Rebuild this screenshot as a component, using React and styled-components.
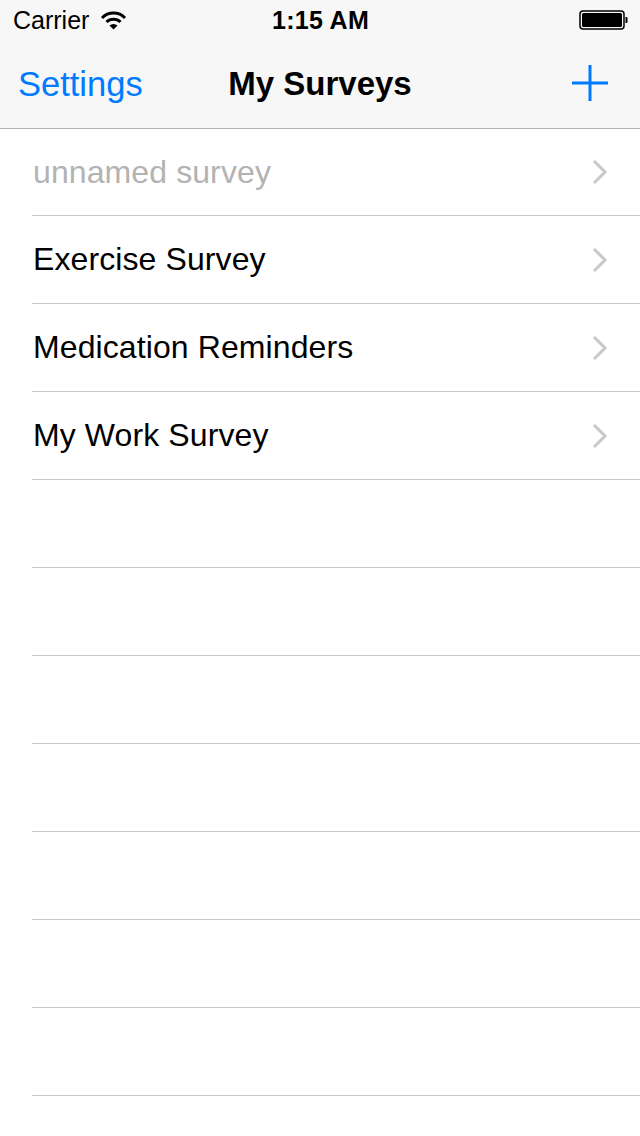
import React from "react";
import styled, { createGlobalStyle } from "styled-components";

const GlobalStyle = createGlobalStyle`
  html, body {
    margin: 0;
    padding: 0;
    background: #ffffff;
    font-family: "Liberation Sans", Arial, sans-serif;
  }
`;

const Screen = styled.div`
  width: 640px;
  height: 1136px;
  overflow: hidden;
  background: #ffffff;
`;

const Header = styled.div`
  background: #f7f7f7;
  border-bottom: 1px solid #b2b2b2;
`;

const StatusBar = styled.div`
  height: 40px;
  display: grid;
  grid-template-columns: 1fr auto 1fr;
  align-items: center;
  padding: 0 12px 0 13px;
  font-size: 25px;
  color: #000;
`;

const StatusLeft = styled.div`
  display: flex;
  align-items: center;
  gap: 11px;
`;

const Clock = styled.div`
  font-weight: bold;
  font-size: 25px;
  letter-spacing: 0.3px;
`;

const StatusRight = styled.div`
  display: flex;
  justify-content: flex-end;
`;

const NavBar = styled.div`
  height: 88px;
  display: grid;
  grid-template-columns: 1fr auto 1fr;
  align-items: center;
  padding: 0 32px 0 18px;
`;

const NavButton = styled.div`
  color: #007aff;
  font-size: 34.5px;
  justify-self: ${(p) => (p.right ? "end" : "start")};
  display: flex;
  align-items: center;
  margin-top: ${(p) => (p.right ? "-3px" : "0")};
`;

const Title = styled.div`
  font-size: 33px;
  font-weight: bold;
  color: #000;
  margin-left: 14px;
`;

const List = styled.div`
  padding-left: 32px;
`;

const Row = styled.div`
  height: 87px;
  border-bottom: 1px solid #c8c7cc;
  display: flex;
  align-items: center;
  justify-content: space-between;
  padding-right: 32px;

  &:first-child {
    height: 86px;
  }
`;

const RowLabel = styled.div`
  font-size: 32px;
  color: ${(p) => (p.muted ? "#b3b3b3" : "#000")};
  margin-left: 1px;
  letter-spacing: 0.1px;
`;

const Wifi = () => (
  <svg width="27" height="19" viewBox="0 0 27 19">
    <path
      d="M2 7 A16 16 0 0 1 25 7"
      fill="none"
      stroke="#000"
      strokeWidth="3"
    />
    <path
      d="M6.5 11 A10 10 0 0 1 20.5 11"
      fill="none"
      stroke="#000"
      strokeWidth="3"
    />
    <path d="M9.5 14.5 L13.5 18.5 L17.5 14.5 A6 6 0 0 0 9.5 14.5 Z" fill="#000" />
  </svg>
);

const Battery = () => (
  <svg width="49" height="20" viewBox="0 0 49 20">
    <rect x="1" y="1" width="44" height="18" rx="3" fill="none" stroke="#000" strokeWidth="1.5" />
    <rect x="3" y="3" width="40" height="14" rx="1.5" fill="#000" />
    <path d="M46.5 7 h1 a1 1 0 0 1 1 1 v4 a1 1 0 0 1 -1 1 h-1 z" fill="#000" />
  </svg>
);

const Plus = () => (
  <svg width="36" height="36" viewBox="0 0 36 36">
    <rect x="16.5" y="0" width="3" height="36" fill="#007aff" />
    <rect x="0" y="16.5" width="36" height="3" fill="#007aff" />
  </svg>
);

const Chevron = () => (
  <svg width="16" height="26" viewBox="0 0 16 26">
    <path d="M2 2 L13 13 L2 24" fill="none" stroke="#c7c7cc" strokeWidth="3" />
  </svg>
);

const surveys = [
  { name: "unnamed survey", muted: true },
  { name: "Exercise Survey" },
  { name: "Medication Reminders" },
  { name: "My Work Survey" },
];

const App = () => {
  const blanks = Array.from({ length: 8 });
  return (
    <Screen>
      <GlobalStyle />
      <Header>
        <StatusBar>
          <StatusLeft>
            <span>Carrier</span>
            <Wifi />
          </StatusLeft>
          <Clock>1:15 AM</Clock>
          <StatusRight>
            <Battery />
          </StatusRight>
        </StatusBar>
        <NavBar>
          <NavButton>Settings</NavButton>
          <Title>My Surveys</Title>
          <NavButton right>
            <Plus />
          </NavButton>
        </NavBar>
      </Header>
      <List>
        {surveys.map((s) => (
          <Row key={s.name}>
            <RowLabel muted={s.muted}>{s.name}</RowLabel>
            <Chevron />
          </Row>
        ))}
        {blanks.map((_, i) => (
          <Row key={i} />
        ))}
      </List>
    </Screen>
  );
};

export default App;
